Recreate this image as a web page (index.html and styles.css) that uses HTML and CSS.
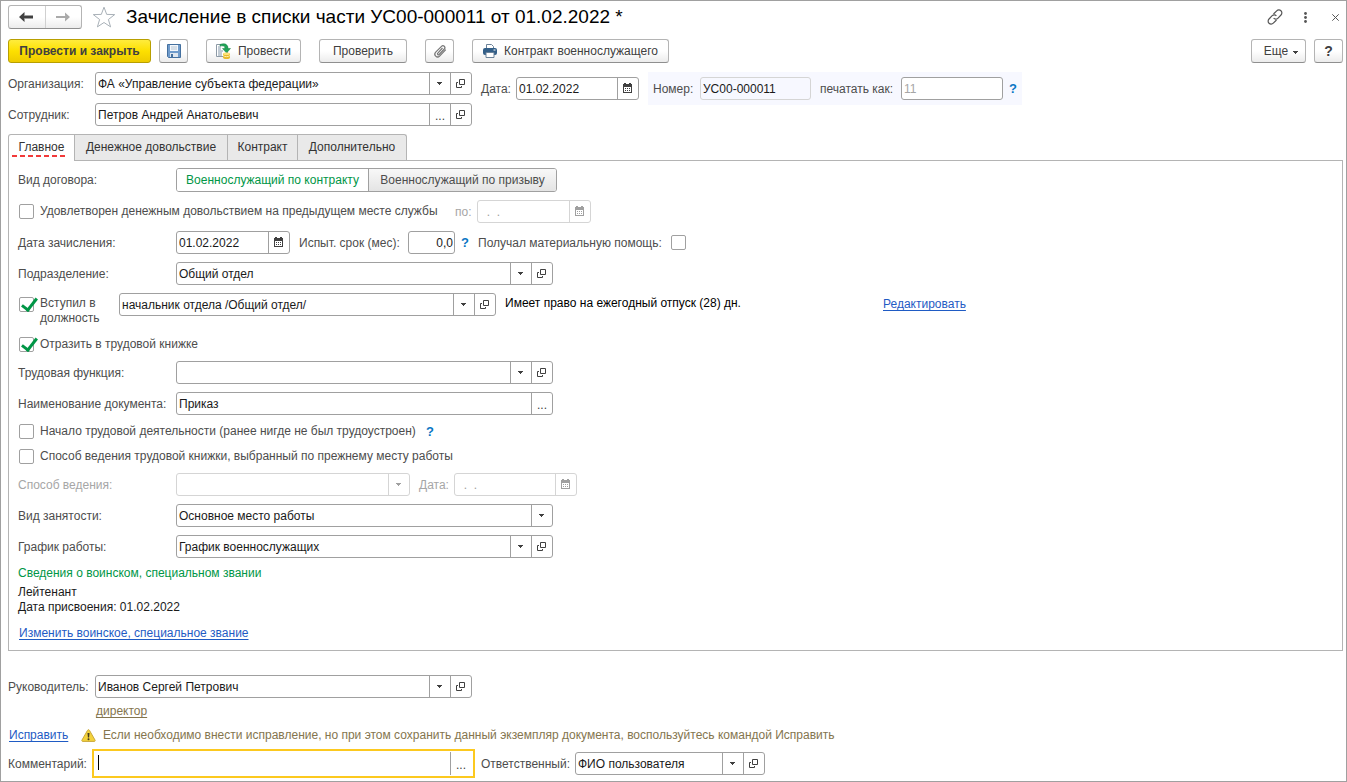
FILE: index.html
```html
<!DOCTYPE html>
<html lang="ru">
<head>
<meta charset="utf-8">
<title>Зачисление в списки части</title>
<link rel="stylesheet" href="styles.css">
</head>
<body>
<svg class="defs" aria-hidden="true">
  <symbol id="arrow" viewBox="0 0 6 3"><path d="M0 0h5v1H4v1H3v1H2V2H1V1H0z"/></symbol>
  <symbol id="open" viewBox="0 0 10 9"><path d="M3.500.5h5v5h-5zM2 3.500H.5v5h5V7" fill="none" stroke="currentColor"/></symbol>
  <symbol id="cal" viewBox="0 0 10 11"><path d="M0 1h1V0h2v1h3V0h2v1h1v9H0zM1 4v5h7V4z" fill-rule="evenodd"/><path d="M2 5h1v1H2zM4 5h1v1H4zM6 5h1v1H6zM2 7h1v1H2zM4 7h1v1H4zM6 7h1v1H6z"/></symbol>
</svg>
<main class="window">
  <header class="titlebar">
    <div class="nav">
      <button class="nav-btn" aria-label="Назад"><svg width="15" height="10" viewBox="0 0 15 10"><path d="M14 5H3" stroke="#404040" stroke-width="3" fill="none"/><path d="M0 5l5.500-5v3L4 5l1.500 2v3z" fill="#404040"/></svg></button>
      <button class="nav-btn" aria-label="Вперед"><svg width="15" height="10" viewBox="0 0 15 10"><path d="M0 5h12" stroke="#aaa" stroke-width="2" fill="none"/><path d="M14 5L9 .5v3L10.500 5 9 6.500v3z" fill="#aaa"/></svg></button>
    </div>
    <button class="icon-btn star" aria-label="В избранное"><svg width="24" height="22" viewBox="0 0 24 22"><path d="M12 1.200l2.700 7.200 8 .2-6.300 4.900 2.200 7.400L12 16.500l-6.600 4.400 2.200-7.400L1.300 8.600l8-.2z" fill="#fff" stroke="#a9b1b8"/></svg></button>
    <h1 class="title">Зачисление в списки части УС00-000011 от 01.02.2022 *</h1>
    <div class="window-tools">
      <button class="icon-btn" aria-label="Ссылка"><svg width="16" height="16" viewBox="0 0 16 16"><g fill="none" stroke="#555" stroke-width="1.200"><path d="M6.500 5L9.700 1.800a2.900 2.900 0 0 1 4.300 4.200L10.800 9.300A2.900 2.900 0 0 1 6.600 9.200"/><path d="M9.500 11L6.300 14.200A2.900 2.900 0 0 1 2 10L5.200 6.700A2.900 2.900 0 0 1 9.400 6.800"/></g></svg></button>
      <button class="icon-btn" aria-label="Меню"><svg width="3" height="11" viewBox="0 0 3 11"><g fill="#555"><circle cx="1.500" cy="1.500" r="1.400"/><circle cx="1.500" cy="5.500" r="1.400"/><circle cx="1.500" cy="9.500" r="1.400"/></g></svg></button>
      <button class="icon-btn close" aria-label="Закрыть"><svg width="7" height="7" viewBox="0 0 7 7"><path d="M.3.3l6.400 6.400M6.700.3L.3 6.700" stroke="#555"/></svg></button>
    </div>
  </header>

  <div class="toolbar">
    <button class="btn primary">Провести и закрыть</button>
    <button class="btn square" aria-label="Записать"><svg width="14" height="14" viewBox="0 0 14 14"><path d="M.5.500h13v13h-12l-1-1z" fill="#6f9bcb" stroke="#44709f"/><path d="M3 1h8v6H3z" fill="#f3f7fb"/><path d="M4 3h6M4 5h6" stroke="#b6c4d2"/><path d="M3 9h8v4H3z" fill="#dfe7ef"/><path d="M4 10h2v3H4z" fill="#44709f"/></svg></button>
    <button class="btn spaced post-btn"><svg width="15" height="16" viewBox="0 0 15 16"><path d="M.5 1.500h9l2 2v10H.5z" fill="#fff" stroke="#8d9aa6"/><path d="M2 4h3M2 6h3M2 8h5M2 10h4M2 12h4" stroke="#8296a8"/><path d="M4 1.500c5-2 8 0 8 4h2.500L10.500 10 6.500 5.500H9C9 3 7 2.500 4 3z" fill="#21a457" stroke="#168144" stroke-width=".5"/><path d="M7 10.500h7v4c0 2-7 2-7 0z" fill="#e8b92e"/><ellipse cx="10.500" cy="10.800" rx="3.500" ry="1.300" fill="#ffe27a"/><path d="M7 12.500c1 1.500 6 1.500 7 0" stroke="#fff0a8" fill="none"/></svg>Провести</button>
    <button class="btn spaced check-btn">Проверить</button>
    <button class="btn square spaced" aria-label="Файлы"><svg width="14" height="14" viewBox="0 0 14 14"><path d="M9.500 4L4.800 9.200a.9.900 0 0 0 1.300 1.300L11.300 5a1.900 1.900 0 0 0-2.800-2.700L2.700 8.200a2.700 2.700 0 0 0 3.900 3.900L12.800 5.600" fill="none" stroke="#777" stroke-width="1.200"/></svg></button>
    <button class="btn spaced contract-btn"><svg width="14" height="14" viewBox="0 0 14 14"><path d="M3.500 5V.5h5l2 2V5" fill="#fff" stroke="#6b8299"/><rect y="4" width="14" height="7" rx="2" fill="#335f88"/><path d="M3 8.500h8v5H3z" fill="#fff" stroke="#6b8299"/><path d="M10.500 6h2" stroke="#fff"/></svg>Контракт военнослужащего</button>
    <button class="btn more">Еще<svg width="6" height="3"><use href="#arrow"/></svg></button>
    <button class="btn square help-btn" aria-label="Справка">?</button>
  </div>

  <section class="head">
    <div class="stack">
      <div class="row"><label class="lbl short" for="org">Организация:</label>
        <div class="field wide"><input id="org" value="ФА «Управление субъекта федерации»"><button aria-label="Выбрать"><svg width="6" height="3"><use href="#arrow"/></svg></button><button aria-label="Открыть"><svg width="10" height="9"><use href="#open"/></svg></button></div></div>
      <div class="row"><label class="lbl short" for="emp">Сотрудник:</label>
        <div class="field wide"><input id="emp" value="Петров Андрей Анатольевич"><button aria-label="Выбрать" class="dots">...</button><button aria-label="Открыть"><svg width="10" height="9"><use href="#open"/></svg></button></div></div>
    </div>
    <div class="row head-date"><label class="lbl after date-lbl" for="date">Дата:</label>
      <div class="field date"><input id="date" value="01.02.2022"><button aria-label="Календарь"><svg width="10" height="11"><use href="#cal"/></svg></button></div></div>
    <div class="row number">
      <label class="lbl num-lbl" for="num">Номер:</label><div class="field num readonly"><input id="num" value="УС00-000011" readonly></div>
      <label class="lbl after print-lbl" for="print">печатать как:</label><div class="field printas"><input id="print" placeholder="11"></div>
      <button class="hint" aria-label="Подсказка">?</button>
    </div>
  </section>

  <div class="tabs" role="tablist">
    <button class="tab active" role="tab" aria-selected="true">Главное</button>
    <button class="tab pay" role="tab">Денежное довольствие</button>
    <button class="tab" role="tab">Контракт</button>
    <button class="tab extra" role="tab">Дополнительно</button>
  </div>

  <section class="panel" role="tabpanel">
    <div class="row"><span class="lbl col">Вид договора:</span>
      <div class="segmented"><button class="seg on" aria-pressed="true">Военнослужащий по контракту</button><button class="seg" aria-pressed="false">Военнослужащий по призыву</button></div></div>

    <div class="row"><label class="check paid"><input type="checkbox">Удовлетворен денежным довольствием на предыдущем месте службы</label>
      <label class="lbl after until-lbl muted" for="until">по:</label>
      <div class="field until disabled"><input id="until" value="  .  ." disabled><button aria-label="Календарь" disabled><svg width="10" height="11"><use href="#cal"/></svg></button></div></div>

    <div class="row"><label class="lbl col" for="enroll">Дата зачисления:</label>
      <div class="field until"><input id="enroll" value="01.02.2022"><button aria-label="Календарь"><svg width="10" height="11"><use href="#cal"/></svg></button></div>
      <label class="lbl after trial-lbl" for="trial">Испыт. срок (мес):</label>
      <div class="field trial"><input id="trial" value="0,0"></div>
      <button class="hint" aria-label="Подсказка">?</button>
      <label class="lbl after aid-lbl" for="aid">Получал материальную помощь:</label><input id="aid" type="checkbox"></div>

    <div class="row"><label class="lbl col" for="dep">Подразделение:</label>
      <div class="field wide"><input id="dep" value="Общий отдел"><button aria-label="Выбрать"><svg width="6" height="3"><use href="#arrow"/></svg></button><button aria-label="Открыть"><svg width="10" height="9"><use href="#open"/></svg></button></div></div>

    <div class="row position">
      <label class="check wrap"><input type="checkbox" checked><span>Вступил в должность</span></label>
      <div class="field wide"><input aria-label="Должность" value="начальник отдела /Общий отдел/"><button aria-label="Выбрать"><svg width="6" height="3"><use href="#arrow"/></svg></button><button aria-label="Открыть"><svg width="10" height="9"><use href="#open"/></svg></button></div>
      <span class="vacation">Имеет право на ежегодный отпуск (28) дн.</span>
      <a class="link" href="#">Редактировать</a></div>

    <div class="row check-row"><label class="check"><input type="checkbox" checked>Отразить в трудовой книжке</label></div>

    <div class="row"><label class="lbl col" for="func">Трудовая функция:</label>
      <div class="field wide"><input id="func"><button aria-label="Выбрать"><svg width="6" height="3"><use href="#arrow"/></svg></button><button aria-label="Открыть"><svg width="10" height="9"><use href="#open"/></svg></button></div></div>

    <div class="row"><label class="lbl col" for="doc">Наименование документа:</label>
      <div class="field wide"><input id="doc" value="Приказ"><button aria-label="Выбрать" class="dots">...</button></div></div>

    <div class="row check-row"><label class="check first-job"><input type="checkbox">Начало трудовой деятельности (ранее нигде не был трудоустроен)</label><button class="hint" aria-label="Подсказка">?</button></div>
    <div class="row check-row"><label class="check"><input type="checkbox">Способ ведения трудовой книжки, выбранный по прежнему месту работы</label></div>

    <div class="row"><label class="lbl col muted" for="mode">Способ ведения:</label>
      <div class="field mode disabled"><select id="mode" disabled><option></option></select><span class="drop"><svg width="6" height="3"><use href="#arrow"/></svg></span></div>
      <label class="lbl after date-lbl muted" for="mdate">Дата:</label>
      <div class="field date disabled"><input id="mdate" value="  .  ." disabled><button aria-label="Календарь" disabled><svg width="10" height="11"><use href="#cal"/></svg></button></div></div>

    <div class="row"><label class="lbl col" for="kind">Вид занятости:</label>
      <div class="field wide"><select id="kind"><option>Основное место работы</option></select><span class="drop"><svg width="6" height="3"><use href="#arrow"/></svg></span></div></div>

    <div class="row"><label class="lbl col" for="sched">График работы:</label>
      <div class="field wide"><input id="sched" value="График военнослужащих"><button aria-label="Выбрать"><svg width="6" height="3"><use href="#arrow"/></svg></button><button aria-label="Открыть"><svg width="10" height="9"><use href="#open"/></svg></button></div></div>

    <div class="rank">
      <h2 class="rank-title">Сведения о воинском, специальном звании</h2>
      <p class="rank-text">Лейтенант<br>Дата присвоения: 01.02.2022</p>
      <a class="link" href="#">Изменить воинское, специальное звание</a>
    </div>
  </section>

  <footer class="foot">
    <div class="row"><label class="lbl short" for="boss">Руководитель:</label>
      <div class="field wide"><input id="boss" value="Иванов Сергей Петрович"><button aria-label="Выбрать"><svg width="6" height="3"><use href="#arrow"/></svg></button><button aria-label="Открыть"><svg width="10" height="9"><use href="#open"/></svg></button></div></div>
    <a class="link post" href="#">директор</a>
    <div class="row fix"><a class="link" href="#">Исправить</a>
      <svg width="15" height="13" viewBox="0 0 15 13"><path d="M7.500.7c.5 0 .8.300 1 .7l5.600 9.800c.3.600 0 1.200-.7 1.200H1.600c-.7 0-1-.6-.7-1.200L6.500 1.400c.2-.4.500-.7 1-.7z" fill="#f3d23c" stroke="#c9a73a"/><path d="M6.500 4h2l-.4 4.500H6.900z" fill="#443c20"/><circle cx="7.500" cy="10.200" r="1" fill="#443c20"/></svg>
      <span class="note">Если необходимо внести исправление, но при этом сохранить данный экземпляр документа, воспользуйтесь командой Исправить</span></div>
    <div class="row comment-row"><label class="lbl comment-lbl" for="comment">Комментарий:</label>
      <div class="field comment"><input id="comment"><button aria-label="Выбрать" class="dots">...</button></div>
      <label class="lbl resp" for="user">Ответственный:</label>
      <div class="field user"><input id="user" value="ФИО пользователя"><button aria-label="Выбрать"><svg width="6" height="3"><use href="#arrow"/></svg></button><button aria-label="Открыть"><svg width="10" height="9"><use href="#open"/></svg></button></div></div>
  </footer>
</main>
</body>
</html>
```
FILE: styles.css
```css
* { box-sizing: border-box; }
body { margin: 0; background: #fff; color: #4d4d4d; font: 12px/15px "Liberation Sans", Arial, sans-serif; }
button, input, select { font: inherit; color: inherit; margin: 0; padding: 0; border: 0; background: none; border-radius: 0; }
button { cursor: pointer; }
svg { display: block; flex: none; fill: currentColor; }
.defs { position: absolute; width: 0; height: 0; }

.window { min-height: 100vh; border: 1px solid #a0a0a0; padding: 4px 3px 3px 7px; }

.titlebar { display: flex; align-items: center; height: 24px; }
.nav { display: flex; width: 74px; height: 24px; border: 1px solid #b4b4b4; border-bottom-color: #8f8f8f; border-radius: 3px; background: linear-gradient(#fff 50%, #ececec); }
.nav-btn { flex: 1; display: flex; align-items: center; justify-content: center; }
.nav-btn + .nav-btn { border-left: 1px solid #d0d0d0; }
.icon-btn { display: flex; align-items: center; justify-content: center; }
.star { margin-left: 10px; }
.title { margin: 0 0 0 10px; color: #000; font-size: 19px; line-height: 24px; font-weight: 400; white-space: nowrap; }
.window-tools { display: flex; gap: 21px; margin-left: auto; padding-right: 4px; }
.close { padding-left: 4px; }

.toolbar { display: flex; margin-top: 10px; }
.btn { display: flex; align-items: center; justify-content: center; gap: 7px; height: 24px; padding: 0; border: 1px solid #b4b4b4; border-bottom-color: #8f8f8f; border-radius: 3px; background: linear-gradient(#fff 50%, #ececec); color: #404040; white-space: nowrap; }
.btn.square { width: 29px; margin-left: 8px; }
.btn.spaced { margin-left: 18px; }
.btn.primary { width: 143px; border-color: #b89f00; background: linear-gradient(#ffec3d, #fde000 50%, #eecb00); font-weight: 700; }
.post-btn { width: 95px; }
.check-btn { width: 88px; }
.contract-btn { width: 197px; }
.btn.more { margin-left: auto; width: 55px; padding-left: 6px; gap: 5px; }
.btn.more svg { margin-top: 2px; }
.help-btn { font-size: 14px; font-weight: 700; }

.row { display: flex; align-items: center; }
.lbl { white-space: nowrap; padding-top: 1px; }
.lbl.short { width: 87px; }
.lbl.col { width: 158px; }
.lbl.after { margin-left: 9px; }
.date-lbl { width: 35px; }
.num-lbl { width: 47px; }
.print-lbl { width: 81px; }
.until-lbl { width: 22px; }
.trial-lbl { width: 109px; }
.aid-lbl { width: 193px; }
.muted { color: #a6a6a6; }

.field { display: flex; height: 23px; border: 1px solid #a0a0a0; border-radius: 3px; background: #fff; color: #1a1a1a; overflow: hidden; }
.field input, .field select { flex: 1; min-width: 0; padding: 1px 2px 0; outline: 0; white-space: pre; }
.field select { appearance: none; opacity: 1; }
.field input::placeholder { color: #a6a6a6; opacity: 1; }
.field button, .drop { display: flex; align-items: center; justify-content: center; width: 21px; border-left: 1px solid #a0a0a0; color: #404040; }
.field button.dots { padding-top: 3px; }
.field.disabled, .field.disabled button, .field.disabled .drop { border-color: #d5d5d5; color: #a0a0a0; }
.field.readonly { border-color: #d5d5d5; background: transparent; }
.field.wide { width: 377px; }
.field.date { width: 123px; }
.field.until { width: 114px; }
.field.trial { width: 47px; }
.field.trial input { text-align: right; padding-right: 1px; }
.field.num { width: 111px; }
.field.printas { width: 102px; }
.field.mode { width: 234px; }
.field.user { width: 190px; }
.hint { width: 8px; margin-left: 6px; color: #0a76c4; font-size: 13px; font-weight: 700; }

.head { display: flex; align-items: flex-start; margin-top: 9px; }
.stack { display: flex; flex-direction: column; gap: 8px; }
.head-date { height: 33px; }
.number { height: 33px; margin-left: 9px; padding: 0 5px; background: #f7f8ff; }

.tabs { display: flex; margin-top: 8px; }
.tab { width: 70px; height: 26px; border: 1px solid #b4b4b4; border-width: 1px 1px 0 0; background: #e9e9e9; color: #333; }
.tab.active { position: relative; width: 67px; height: 27px; margin-bottom: -1px; padding-bottom: 2px; border-left-width: 1px; border-top-left-radius: 3px; background: repeating-linear-gradient(90deg, #f23a3a 0 5px, #fff 5px 8px) 3px 20px / 54px 2px no-repeat #fff; }
.tab.pay { width: 153px; }
.tab.extra { width: 109px; border-top-right-radius: 3px; }

.panel { display: flex; flex-direction: column; gap: 8px; padding: 7px 9px 9px; border: 1px solid #b4b4b4; }
.segmented { display: flex; width: 381px; height: 24px; border: 1px solid #a0a0a0; border-radius: 3px; overflow: hidden; }
.seg { flex: 1; background: linear-gradient(#f8f8f8, #e4e4e4); }
.seg.on { flex: none; width: 192px; border-right: 1px solid #a0a0a0; background: #fff; color: #009646; }

.check { display: flex; align-items: center; gap: 6px; padding-left: 1px; white-space: nowrap; }
.check.paid { width: 428px; }
.check.first-job { width: 402px; }
input[type=checkbox] { appearance: none; flex: none; width: 15px; height: 15px; border: 1px solid #a0a0a0; border-radius: 2px; background: #fff; }
input[type=checkbox]:checked { position: relative; }
input[type=checkbox]:checked::after { content: ""; position: absolute; left: 5px; top: -3px; width: 6px; height: 13px; border: solid #009646; border-width: 0 3px 3px 0; transform: rotate(38deg); }
.check-row { height: 17px; }
.position { align-items: flex-start; min-height: 35px; }
.check.wrap { align-items: flex-start; width: 101px; padding-top: 3px; white-space: normal; }
.check.wrap input { margin-top: 1px; }
.vacation { width: 387px; padding: 3px 0 0 9px; color: #000; }
.position .link { padding-top: 4px; }
.link { color: #1f5bc4; text-decoration: underline; text-underline-offset: 2px; }

.rank { line-height: 15px; }
.rank-title { margin: 0 0 4px; font-size: 12px; font-weight: 400; color: #009646; }
.rank-text { margin: 0 0 11px; color: #1a1a1a; }
.rank .link { margin-left: 1px; }

.foot { margin-top: 24px; }
.post { display: block; width: max-content; margin: 6px 0 9px 88px; color: #84754e; }
.fix { padding-left: 1px; }
.fix .link { width: 61px; }
.fix svg { margin: 0 7px 0 11px; }
.note { color: #84754e; }
.comment-row { margin-top: 6px; }
.comment-lbl { width: 84px; }
.field.comment { width: 383px; height: 29px; padding: 1px 2px; border: 2px solid #fcc91f; border-radius: 0; }
.field.comment::before { content: ""; width: 1px; height: 15px; margin: 3px 0 0 2px; background: #000; }
.resp { width: 94px; margin-left: 6px; }
```
